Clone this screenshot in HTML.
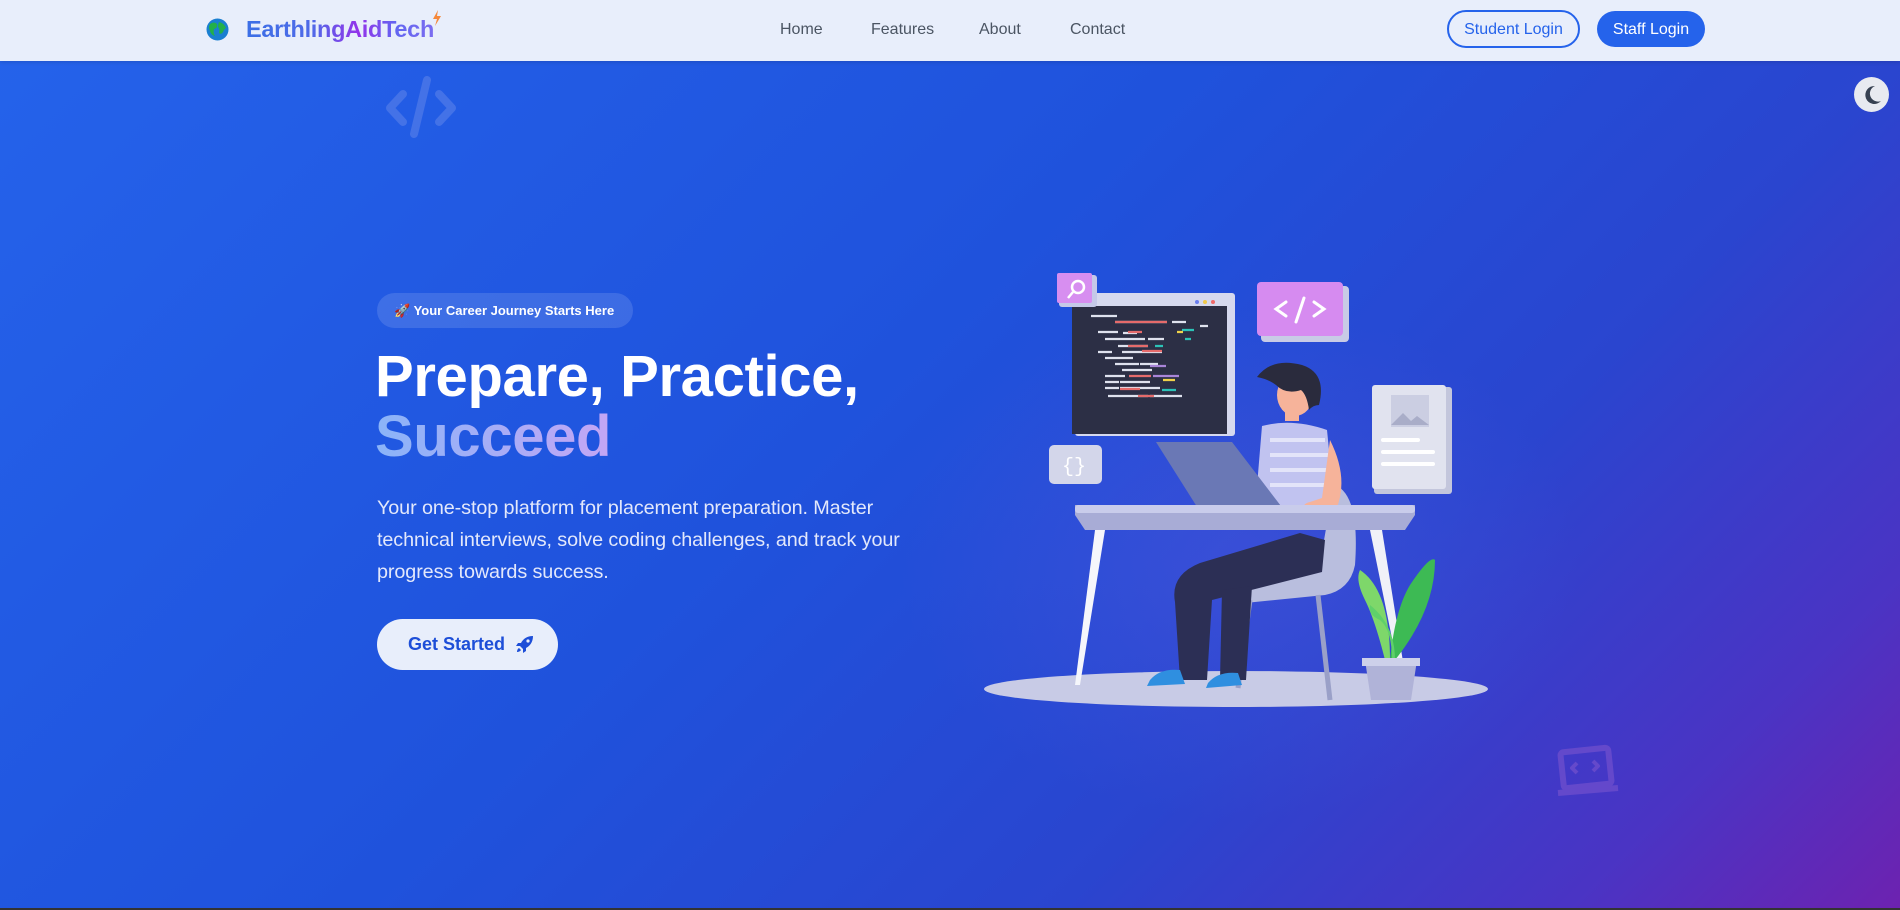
<!DOCTYPE html>
<html><head><meta charset="utf-8"><style>
*{margin:0;padding:0;box-sizing:border-box}
body{width:1900px;height:910px;overflow:hidden;font-family:"Liberation Sans",sans-serif;position:relative;background:linear-gradient(135deg,#2563eb 0%,#1f52dc 45%,#2a45cf 70%,#4a34c4 88%,#6d22b0 100%)}
.nav{position:absolute;left:0;top:0;width:1900px;height:61px;background:#e8eefb;box-shadow:0 1px 4px rgba(0,0,0,.15)}
.logo{position:absolute;left:246px;top:16px;font-size:23.5px;font-weight:bold;letter-spacing:-.3px;background:linear-gradient(90deg,#3b6fe6 0%,#4f6ae8 35%,#9333ea 60%,#6366f1 80%,#7b6cf0 100%);-webkit-background-clip:text;color:transparent}
.links a{position:absolute;top:21px;font-size:16px;color:#4b5563;text-decoration:none}
.btn1{position:absolute;left:1447px;top:10px;width:133px;height:38px;border:2px solid #2563eb;border-radius:20px;color:#2563eb;font-size:16px;text-align:center;line-height:35px}
.btn2{position:absolute;left:1597px;top:11px;width:108px;height:36px;background:#2563eb;border-radius:18px;color:#fff;font-size:16px;text-align:center;line-height:37px}
.moon{position:absolute;left:1854px;top:77px;width:35px;height:35px;border-radius:50%;background:#e8eaf0}
.badge{position:absolute;left:377px;top:293px;width:256px;height:35px;border-radius:18px;background:rgba(255,255,255,.13);color:#fff;font-size:13px;font-weight:bold;line-height:35px;padding-left:17px}
h1{position:absolute;left:375px;top:347px;font-size:58px;line-height:60px;color:#fff;font-weight:bold;letter-spacing:-0.35px}
h1 span{background:linear-gradient(90deg,#8ab4f8,#c4a6f5);-webkit-background-clip:text;color:transparent}
p{position:absolute;left:377px;top:492px;font-size:19.8px;line-height:32px;color:#e3e8fb;letter-spacing:-.1px}
.gs{position:absolute;left:377px;top:619px;width:181px;height:51px;border-radius:26px;background:#e8eefb;color:#1d4ed8;font-size:18px;font-weight:bold;line-height:51px;padding-left:31px}
.bottom{position:absolute;left:0;top:908px;width:1900px;height:2px;background:#333}
</style></head><body>
<svg style="position:absolute;left:0;top:0" width="1900" height="910">
<defs><radialGradient id="gl" cx="50%" cy="50%" r="50%"><stop offset="0" stop-color="#5b5be0" stop-opacity=".35"/><stop offset="1" stop-color="#5b5be0" stop-opacity="0"/></radialGradient></defs>
<ellipse cx="1240" cy="560" rx="340" ry="260" fill="url(#gl)"/>
<g fill="none" stroke="#4f7ae8" stroke-width="8" stroke-linecap="round" stroke-linejoin="round" opacity=".75">
<path d="M403 94 L390 108 L403 122"/><path d="M439 94 L452 108 L439 122"/><path d="M427 80 L414 134"/></g>
<g fill="none" stroke="#6a4ccc" stroke-width="6" stroke-linejoin="round" opacity=".85">
<rect x="1562" y="750" width="48" height="36" rx="3" transform="rotate(-6 1586 768)"/><path d="M1558 793 L1618 788"/><path d="M1577 763 l-5 5 5 5 M1593 761 l5 5 -5 5" stroke-width="4"/></g>
</svg>
<div class="nav">
<svg style="position:absolute;left:206px;top:18px" width="23" height="23"><circle cx="11.5" cy="11.5" r="11" fill="#1a7fd1"/><path d="M4 6 q4-3 7 0 q1 4-3 5 q-1 4 1 7 q-4-1-5-5 q-2-4 0-7z M13 4 q5 1 7 6 q-2 1-3 4 q-2 3-4 1 q1-4-1-6 q0-3 1-5z" fill="#22b04a"/></svg>
<div class="logo">EarthlingAidTech</div>
<svg style="position:absolute;left:432px;top:10px" width="10" height="16"><path d="M6 0 L1 9 H5 L3 16 L9 6 H5 Z" fill="#f5883a"/></svg>
<div class="links"><a style="left:780px">Home</a><a style="left:871px">Features</a><a style="left:979px">About</a><a style="left:1070px">Contact</a></div>
<div class="btn1">Student Login</div><div class="btn2">Staff Login</div>
</div>
<div class="moon"><svg width="35" height="35"><path d="M21 9 a9 9 0 1 0 6 15 a8 8 0 0 1 -6 -15z" fill="#374151"/></svg></div>
<div class="badge">🚀 Your Career Journey Starts Here</div>
<h1>Prepare, Practice,<br><span>Succeed</span></h1>
<p>Your one-stop platform for placement preparation. Master<br>technical interviews, solve coding challenges, and track your<br>progress towards success.</p>
<div class="gs">Get Started <svg style="vertical-align:-3px;margin-left:6px" width="18" height="18" viewBox="0 0 18 18"><path d="M17 1 C11 1 7 4 5 8 L2 8 L0 11 L4 11 L7 14 L7 18 L10 16 L10 13 C14 11 17 7 17 1Z M3 13 C1 14 1 17 1 17 C1 17 4 17 5 15Z" fill="#1d4ed8"/><circle cx="12" cy="6" r="1.6" fill="#e8eefb"/></svg></div>

<svg style="position:absolute;left:0;top:0" width="1900" height="910">
<ellipse cx="1236" cy="689" rx="252" ry="18" fill="#c8cbe6"/>
<rect x="1075" y="293" width="160" height="143" rx="3" fill="#d6d9ee"/>
<rect x="1072" y="306" width="155" height="128" fill="#2c2f45"/>
<circle cx="1197" cy="302" r="2" fill="#6b7ff0"/><circle cx="1205" cy="302" r="2" fill="#f0c94a"/><circle cx="1213" cy="302" r="2" fill="#f06a6a"/>
<g stroke-width="2.2">
<path d="M1091 316h26M1115 322h52M1172 322h14M1200 326h8M1098 332h20M1123 333h14M1105 339h40M1148 339h16M1118 346h30M1098 352h14M1122 352h40M1105 358h28M1115 364h24M1140 364h18M1122 370h30M1105 376h20M1105 382h14M1120 382h30M1105 388h14M1120 388h40M1108 396h40M1150 396h32" stroke="#dfe2ee"/>
<path d="M1115 322h52M1128 332h14M1128 346h20M1142 351h20M1129 376h22M1120 389h20M1138 396h16" stroke="#e56b6b"/>
<path d="M1182 330h12M1155 346h8M1162 390h14M1185 339h6" stroke="#2cc2b7"/>
<path d="M1177 332h6M1163 380h12" stroke="#f0d24a"/>
<path d="M1150 366h16M1153 376h26" stroke="#a985d8"/>
</g>
<rect x="1059" y="275" width="38" height="32" rx="3" fill="#c5c9e8"/>
<rect x="1057" y="273" width="35" height="30" rx="2" fill="#d78ef0"/>
<circle cx="1078" cy="287" r="6" fill="none" stroke="#fff" stroke-width="2.5"/><path d="M1073 292l-5 6" stroke="#fff" stroke-width="2.5"/>
<rect x="1261" y="286" width="88" height="56" rx="4" fill="#c8cbe6"/>
<rect x="1257" y="282" width="86" height="54" rx="4" fill="#d68bf0"/>
<path d="M1286 302l-10 7 10 7M1314 302l10 7-10 7M1304 298l-8 24" stroke="#fff" stroke-width="3" fill="none" stroke-linecap="round"/>
<rect x="1049" y="445" width="53" height="39" rx="5" fill="#d3d6ea"/>
<text x="1062" y="472" font-family="Liberation Mono" font-size="20" fill="#fff">{}</text>
<rect x="1374" y="387" width="78" height="107" rx="3" fill="#c3c6dc"/>
<rect x="1372" y="385" width="74" height="104" rx="3" fill="#e1e3ef"/>
<rect x="1391" y="395" width="38" height="32" fill="#cbcee2"/><path d="M1391 425l12-12 8 8 6-5 12 9z" fill="#a9adc8"/>
<path d="M1383 440h35M1383 452h50M1383 464h50" stroke="#fff" stroke-width="4" stroke-linecap="round"/>
<path d="M1335 485 q25 10 20 80 q-5 25-30 30 l-80 8 q-15-12 5-25 l70-10 q5-40 15-83z" fill="#b9bede"/>
<path d="M1318 595 l12 105 M1250 600 l-12 88" stroke="#9aa0c8" stroke-width="5"/>
<path d="M1095 530 l10 0 -25 155 -5 0z" fill="#f5f6fb"/>
<path d="M1370 530 l12 0 22 138 -6 0z" fill="#f0f1f8"/>
<path d="M1262 426 q30-8 65 4 l8 80 -80 0z" fill="#c1c3f0"/>
<path d="M1270 440h55M1270 455h58M1270 470h60M1270 485h60" stroke="#e3e4f9" stroke-width="4"/>
<path d="M1330 440 q20 40 5 72 l-30 2 q-5-10 5-12 l12-4z" fill="#f6b39a"/>
<path d="M1156 442 l76 0 52 68 -85 0z" fill="#6a78b5"/>
<path d="M1200 510h90v6h-90z" fill="#2c2f45"/>
<path d="M1075 505 h340 v10 l-10 15 h-320 l-10-15z" fill="#a8acd6"/>
<rect x="1075" y="505" width="340" height="8" rx="3" fill="#c9cceb"/>
<path d="M1300 533 L1325 540 L1322 572 L1212 600 L1207 680 L1180 680 L1175 602 Q1170 575 1200 563 Z" fill="#2c2f55"/>
<path d="M1222 590 L1252 586 L1246 680 L1220 680 Z" fill="#2c2f55"/>
<path d="M1150 680 q10-12 30-10 l5 14 -38 2z" fill="#2f8fe0"/>
<path d="M1208 683 q10-12 30-10 l4 12 -36 3z" fill="#2f8fe0"/>
<rect x="1285" y="405" width="14" height="16" fill="#f6b39a"/>
<ellipse cx="1295" cy="395" rx="18" ry="21" fill="#f6b39a"/>
<path d="M1257 377 q15-20 45-12 q25 8 17 40 q-6 0 -10 5 q-2-15-8-20 q-15 5-25-5 q-8 -6-19-8z" fill="#2a2b3d"/>
<path d="M1385 660 q-10-40-20-60 q-10-20-5-30 q30 20 30 90z" fill="#7ed76a"/>
<path d="M1390 660 q5-50 20-75 q20-30 25-25 q0 50-40 100z" fill="#3dba54"/>
<path d="M1392 660 q0-30-12-40 q-12-5-10-15 q25 20 25 55z" fill="#5fd06a"/>
<path d="M1365 660h52l-6 40h-40z" fill="#b0b3d8"/>
<rect x="1362" y="658" width="58" height="8" fill="#cdd0ea"/>
</svg>
<div class="bottom"></div>
</body></html>
